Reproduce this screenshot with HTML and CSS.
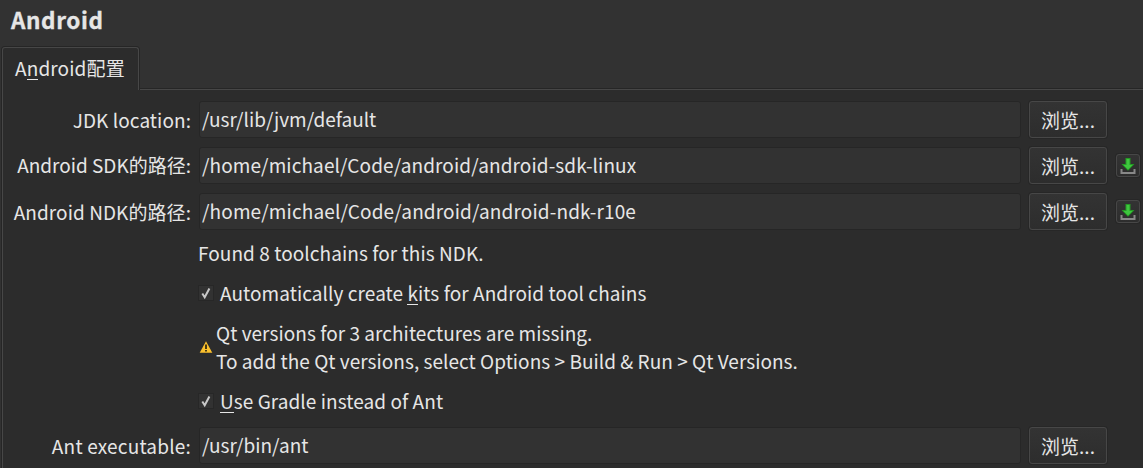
FILE: index.html
```html
<!DOCTYPE html>
<html lang="zh-CN">
<head>
<meta charset="utf-8">
<title>Android</title>
<link rel="stylesheet" href="styles.css">
</head>
<body>
<h1 class="title"><span class="t-title">Android</span></h1>
<div class="tabs"><div class="tab"><span class="t-tab">A<span class="key">n</span>droid配置</span></div><div class="rest"></div></div>
<main class="form">
  <label class="label"><span class="t-l1">JDK location:</span></label>
  <div class="input"><span class="t-i1">/usr/lib/jvm/default</span></div>
  <button class="browse">浏览...</button>
  <i></i>

  <label class="label raised"><span class="t-l2">Android SDK的路径:</span></label>
  <div class="input"><span class="t-i2">/home/michael/Code/android/android-sdk-linux</span></div>
  <button class="browse">浏览...</button>
  <button class="download"><svg width="16" height="16" viewBox="0 0 16 16"><path d="M5.5 0h5v6h4L8 12.700 1.500 6h4z" fill="#249a24"/><path d="M6.500 1h3v6h3L8 11.500 3.500 7h3z" fill="#3fc63f"/><path d="M.5 11h2v3h11v-3h2v5H.5z" fill="#888"/></svg></button>

  <label class="label"><span class="t-l3">Android NDK的路径:</span></label>
  <div class="input"><span class="t-i3">/home/michael/Code/android/android-ndk-r10e</span></div>
  <button class="browse">浏览...</button>
  <button class="download"><svg width="16" height="16" viewBox="0 0 16 16"><path d="M5.5 0h5v6h4L8 12.700 1.500 6h4z" fill="#249a24"/><path d="M6.500 1h3v6h3L8 11.500 3.500 7h3z" fill="#3fc63f"/><path d="M.5 11h2v3h11v-3h2v5H.5z" fill="#888"/></svg></button>

  <div class="notes">
    <p class="found"><span class="t-found">Found 8 toolchains for this NDK.</span></p>
    <div class="check"><span class="box"><svg width="14" height="14" viewBox="0 0 14 14"><path d="M3.300 7.500 5.700 11.200 10.400 2.500" fill="none" stroke="#c8c8c8" stroke-width="2"/></svg></span><span class="t-auto">Automatically create <span class="key">k</span>its for Android tool chains</span></div>
    <div class="warning"><svg width="14" height="12" viewBox="0 0 14 12"><path d="M7 0.300 13.300 11.700H.7z" fill="#fbc02d"/><path d="M6.100 3.500h1.800v4.500H6.100zM6.100 9h1.800v1.600H6.100z" fill="#332a10"/></svg><p><span class="t-w1">Qt versions for 3 architectures are missing.</span><br><span class="t-w2">To add the Qt versions, select Options &gt; Build &amp; Run &gt; Qt Versions.</span></p></div>
    <div class="check"><span class="box"><svg width="14" height="14" viewBox="0 0 14 14"><path d="M3.300 7.500 5.700 11.200 10.400 2.500" fill="none" stroke="#c8c8c8" stroke-width="2"/></svg></span><span class="t-use"><span class="key">U</span>se Gradle instead of Ant</span></div>
  </div>

  <label class="label"><span class="t-l4">Ant executable:</span></label>
  <div class="input"><span class="t-i4">/usr/bin/ant</span></div>
  <button class="browse">浏览...</button>
</main>
</body>
</html>
```

FILE: styles.css
```css
* { box-sizing: border-box; }
body {
  margin: 0;
  height: 468px;
  overflow: hidden;
  background: #323232;
  color: #e6e6e6;
  font: 19px/28px "Noto Sans CJK SC", sans-serif;
}
h1, p { margin: 0; }
.title { height: 47px; padding: 5px 0 0 11px; font-size: 22.500px; line-height: 28px; font-weight: 700; -webkit-text-stroke: 0.3px currentColor; }
.tabs { display: flex; height: 43px; padding-left: 2px; }
.tab {
  width: 137px;
  padding: 6px 0 0 12px;
  border: 1px solid #474747;
  border-bottom: 0;
  border-radius: 3px 3px 0 0;
  background: #2c2c2c;
  box-shadow: 0 0 0 1px #262626;
  clip-path: inset(-1px -1px 0 -1px);
}
.rest { flex: 1; border-bottom: 1px solid #474747; box-shadow: inset 0 -1px #262626; }
.key { background: linear-gradient(currentColor, currentColor) 0 25px / 100% 1px no-repeat; display: inline-block; }
.form {
  display: grid;
  grid-template-columns: 188px 822px 78px 25px;
  grid-template-rows: 37px 37px 37px 179px 37px;
  column-gap: 8px;
  row-gap: 9px;
  height: 378px;
  margin-left: 2px;
  padding-top: 11px;
  border-left: 1px solid #474747;
  background: #2c2c2c;
  box-shadow: -1px 0 #262626;
}
.label { text-align: right; padding-top: 5px; white-space: nowrap; }
.raised { padding-top: 4px; }
.input { padding: 3px 0 0 2px; border: 1px solid #262626; border-radius: 3px; background: #323232; white-space: nowrap; }
button { font: inherit; color: inherit; padding: 0; border: 1px solid #474747; border-radius: 3px; background: linear-gradient(#333, #2d2d2d); box-shadow: 0 0 0 1px #272727; }
.download { display: grid; place-items: center; width: 24px; height: 23px; align-self: center; margin-left: 1px; }
.notes { grid-column: 2 / 5; white-space: nowrap; margin-left: -1px; }
.check { display: flex; height: 28px; margin-top: 12px; align-items: center; gap: 7px; }
.box { display: grid; width: 14px; height: 14px; margin-left: 1px; background: #323232; box-shadow: 0 0 0 1px #272727; }
.warning { display: flex; margin-top: 12px; align-items: center; gap: 3px; padding-left: 1px; }

/* Tracking per text run */
.t-title { letter-spacing: 0.6px; }
.t-tab { letter-spacing: 0.13px; }
.t-l1, .t-l3, .t-auto, .t-use, .t-found { letter-spacing: 0.07px; }
.t-l4 { letter-spacing: 0.2px; }
.t-i2 { letter-spacing: 0.1px; }
.t-i3 { letter-spacing: 0.13px; }
.t-w1 { letter-spacing: 0.05px; }
.t-w2 { letter-spacing: 0.04px; }
```
